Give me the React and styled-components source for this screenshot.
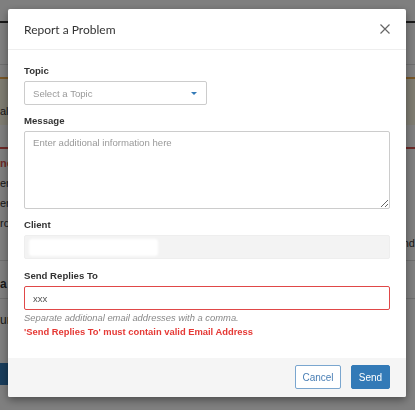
import React from "react";
import styled, { createGlobalStyle } from "styled-components";

const GlobalStyle = createGlobalStyle`
  html, body {
    margin: 0;
    padding: 0;
    background: #fff;
    font-family: "Liberation Sans", Arial, sans-serif;
  }
  * { box-sizing: border-box; }
`;

/* page that sits behind the dialog */
const Page = styled.div`
  width: 415px;
  height: 410px;
  overflow: hidden;
  font-size: 12px;
  color: #333;
`;

const TopBar = styled.div`
  height: 23px;
  border-bottom: 2px solid #333;
`;

const SubBar = styled.div`
  height: 42px;
  border-bottom: 1px solid #ddd;
`;

const WarnBand = styled.div`
  margin-top: 12px;
  height: 48px;
  background: #fcf8e3;
  border-top: 2px solid #f0ad4e;
  padding: 26px 0 0 0;
  font-size: 11px;
`;

const AlertBlock = styled.div`
  margin-top: 22px;
  border-top: 2px solid #d9534f;
  padding: 8px 0 0 0;
  display: flex;
  flex-direction: column;
  gap: 8px;
  font-size: 11px;
  height: 114px;
  border-bottom: 1px solid #ddd;
`;

const PageLine = styled.div`
  color: ${({ red }) => (red ? "#d9534f" : "#333")};
  font-weight: ${({ bold }) => (bold ? "bold" : "normal")};
  text-align: ${({ right }) => (right ? "right" : "left")};
`;

const PageRow = styled.div`
  height: 38px;
  border-bottom: 1px solid #ddd;
  padding-top: 16px;
  font-weight: bold;
`;

const PageButton = styled.div`
  margin-top: 36px;
  width: 60px;
  height: 22px;
  background: #337ab7;
  color: #fff;
  font-size: 11px;
  line-height: 22px;
  text-align: right;
  padding-right: 4px;
`;

/* dialog */
const Overlay = styled.div`
  position: fixed;
  inset: 0;
  background: rgba(0, 0, 0, 0.5);
`;

const Modal = styled.div`
  position: absolute;
  left: 8px;
  top: 9px;
  width: 398px;
  height: 388px;
  background: #fff;
  border-radius: 2px;
  box-shadow: 0 3px 9px rgba(0, 0, 0, 0.4);
  display: flex;
  flex-direction: column;
  overflow: hidden;
`;

const Header = styled.div`
  height: 41px;
  flex: none;
  display: flex;
  align-items: center;
  justify-content: space-between;
  padding: 0 15px 0 16px;
  border-bottom: 1px solid #eee;
`;

const Title = styled.div`
  font-family: Lato, "Liberation Sans", sans-serif;
  font-size: 12px;
  color: #333;
  padding-top: 1px;
`;

const CloseButton = styled.button`
  border: 0;
  background: none;
  padding: 0;
  width: 12px;
  height: 12px;
  display: flex;
  align-items: center;
  justify-content: center;
  cursor: pointer;
`;

const Body = styled.div`
  flex: 1;
  padding: 14px 16px 0 16px;
  display: flex;
  flex-direction: column;
`;

const Field = styled.div`
  display: flex;
  flex-direction: column;
  margin-bottom: ${({ gap }) => gap || "9px"};
`;

const Label = styled.label`
  font-size: 9.6px;
  font-weight: bold;
  color: #333;
  line-height: 14px;
  margin-bottom: 3px;
`;

const SelectBox = styled.div`
  width: 183px;
  height: 24px;
  border: 1px solid #ccc;
  border-radius: 2px;
  display: flex;
  align-items: center;
  justify-content: space-between;
  padding: 0 9px 0 8px;
  font-size: 9.6px;
  color: #999;
`;

const Caret = styled.span`
  width: 0;
  height: 0;
  border-left: 3px solid transparent;
  border-right: 3px solid transparent;
  border-top: 3px solid #337ab7;
`;

const TextArea = styled.textarea`
  width: 366px;
  height: 78px;
  border: 1px solid #ccc;
  border-radius: 2px;
  padding: 5px 8px;
  font-family: "Liberation Sans", Arial, sans-serif;
  font-size: 9.6px;
  color: #333;
  resize: vertical;
  outline: none;
  &::placeholder { color: #999; }
`;

const Input = styled.input`
  width: 366px;
  height: 24px;
  border: 1px solid ${({ invalid }) => (invalid ? "#e04848" : "#ccc")};
  border-radius: 2px;
  padding: 0 8px;
  font-family: "Liberation Sans", Arial, sans-serif;
  font-size: 9.6px;
  color: #555;
  background: #fff;
  outline: none;
`;

const ClientBox = styled.div`
  width: 366px;
  height: 24px;
  border: 1px solid #eee;
  border-radius: 2px;
  background: #f3f3f3;
  display: flex;
  align-items: center;
  padding-left: 4px;
`;

const Redacted = styled.div`
  width: 129px;
  height: 17px;
  background: #fff;
  border-radius: 3px;
  filter: blur(1px);
`;

const HelpText = styled.div`
  font-size: 9.4px;
  font-style: italic;
  color: #888;
  margin-top: 1px;
  line-height: 14px;
`;

const ErrorText = styled.div`
  font-size: 9.4px;
  font-weight: bold;
  color: #e53935;
  line-height: 14px;
`;

const Footer = styled.div`
  height: 39px;
  flex: none;
  background: #f5f5f5;
  display: flex;
  align-items: center;
  justify-content: flex-end;
  gap: 10px;
  padding: 0 16px 1px 0;
`;

const Button = styled.button`
  height: 24px;
  width: ${({ w }) => w};
  padding: 0;
  border-radius: 2px;
  font-family: "Liberation Sans", Arial, sans-serif;
  font-size: 10px;
  border: 1px solid ${({ primary }) => (primary ? "#337ab7" : "#7aa6cf")};
  background: ${({ primary }) => (primary ? "#337ab7" : "#fff")};
  color: ${({ primary }) => (primary ? "#fff" : "#4a7fb5")};
  cursor: pointer;
`;

export default function App() {
  return (
    <>
      <GlobalStyle />
      <Page>
        <TopBar />
        <SubBar />
        <WarnBand>ale</WarnBand>
        <AlertBlock>
          <PageLine red bold>ne</PageLine>
          <PageLine>err</PageLine>
          <PageLine>err</PageLine>
          <PageLine>rc</PageLine>
          <PageLine right>nd</PageLine>
        </AlertBlock>
        <PageRow>a</PageRow>
        <PageLine style={{ marginTop: 14 }}>ur</PageLine>
        <PageButton>a R</PageButton>
      </Page>
      <Overlay>
        <Modal>
          <Header>
            <Title>Report a Problem</Title>
            <CloseButton aria-label="Close">
              <svg width="10" height="10" viewBox="0 0 10 10">
                <path d="M0.5 0.5L9.5 9.5M9.5 0.5L0.5 9.5" stroke="#666" strokeWidth="1.2" />
              </svg>
            </CloseButton>
          </Header>
          <Body>
            <Field>
              <Label>Topic</Label>
              <SelectBox>
                <span>Select a Topic</span>
                <Caret />
              </SelectBox>
            </Field>
            <Field>
              <Label>Message</Label>
              <TextArea placeholder="Enter additional information here" />
            </Field>
            <Field gap="10px">
              <Label>Client</Label>
              <ClientBox>
                <Redacted />
              </ClientBox>
            </Field>
            <Field gap="0">
              <Label>Send Replies To</Label>
              <Input invalid defaultValue="xxx" />
              <HelpText>Separate additional email addresses with a comma.</HelpText>
              <ErrorText>'Send Replies To' must contain valid Email Address</ErrorText>
            </Field>
          </Body>
          <Footer>
            <Button w="46px">Cancel</Button>
            <Button primary w="39px">Send</Button>
          </Footer>
        </Modal>
      </Overlay>
    </>
  );
}
